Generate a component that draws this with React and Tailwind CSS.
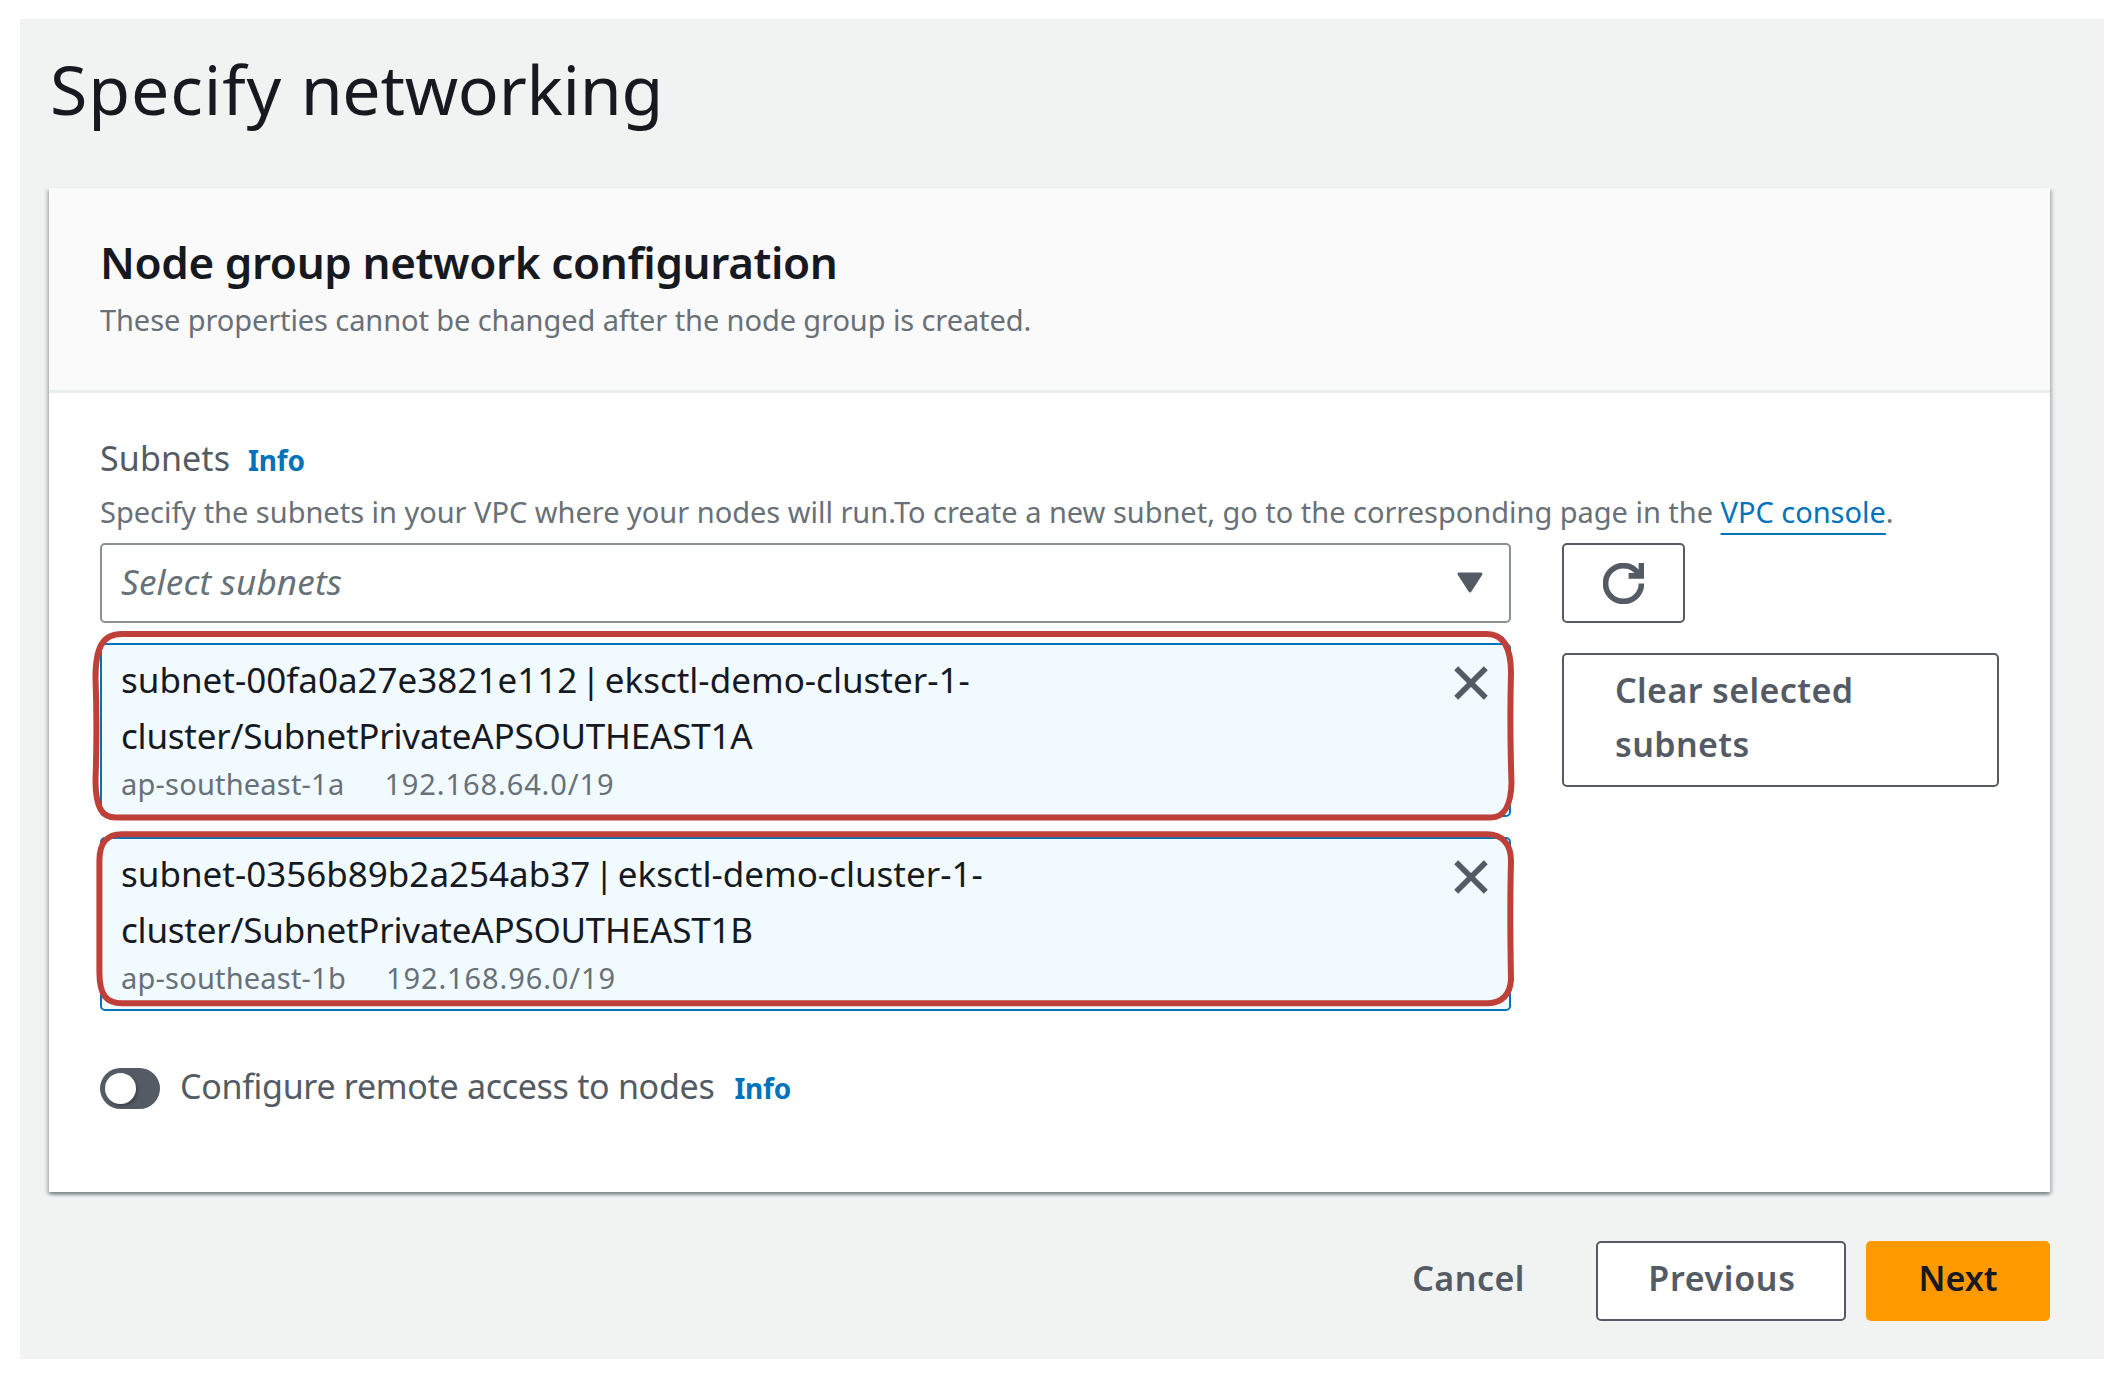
const FONT = "font-['Noto_Sans','Open_Sans',sans-serif]";

function RefreshIcon() {
  return (
    <svg className="size-[41px]" viewBox="0 0 16 16" fill="none" stroke="#545b64" strokeWidth="2.2">
      <path d="M10 5h5V0" />
      <path d="M15 8a6.957 6.957 0 0 1-7 7 6.957 6.957 0 0 1-7-7 6.957 6.957 0 0 1 7-7 6.87 6.87 0 0 1 6.3 4" />
    </svg>
  );
}

function CloseIcon() {
  return (
    <svg className="size-[34px]" viewBox="0 0 34 34" fill="none" stroke="#545b64" strokeWidth="5.6">
      <path d="M2.2 2.2 31.8 31.8M31.8 2.2 2.2 31.8" />
    </svg>
  );
}

function CaretIcon() {
  return (
    <svg className="h-[21px] w-[26px]" viewBox="0 0 26 21" fill="#545b64" stroke="#545b64" strokeWidth="3" strokeLinejoin="round">
      <path d="M2 2h22L13 19z" />
    </svg>
  );
}

const subnets = [
  {
    lines: ["subnet-00fa0a27e3821e112 | eksctl-demo-cluster-1-", "cluster/SubnetPrivateAPSOUTHEAST1A"],
    zone: "ap-southeast-1a",
    cidr: "192.168.64.0/19",
    outline:
      "M22 -9H1387C1404 -9 1411 5 1411 30C1410 65 1410 95 1411.5 140C1411 162 1404 174.5 1391 174.5H16C2 174.5 -4.5 165 -4.5 137C-3.2 100 -3.2 70 -4.5 35C-4.5 5 2 -9 22 -9Z",
  },
  {
    lines: ["subnet-0356b89b2a254ab37 | eksctl-demo-cluster-1-", "cluster/SubnetPrivateAPSOUTHEAST1B"],
    zone: "ap-southeast-1b",
    cidr: "192.168.96.0/19",
    outline:
      "M22 -2.7H1387C1402 -2.7 1411 7 1411 24C1410 60 1410 90 1411 143C1410 157 1402 166.3 1388 166.3H22C7 166.3 -0.6 159 -0.6 135V24C-0.6 5 7 -2.7 22 -2.7Z",
  },
];

function SubnetToken({ subnet }) {
  return (
    <div className="relative flex h-[174px] justify-between rounded-[5px] border-[2.6px] border-[#0073bb] bg-[#f1faff] pt-[7px] pr-[21px] pl-[19px]">
      <div className="text-[#16191f]">
        <div className="text-[35px] leading-[56px] whitespace-nowrap [word-spacing:-5px]">{subnet.lines[0]}</div>
        <div className="text-[35px] leading-[56px] tracking-[-0.22px] whitespace-nowrap">{subnet.lines[1]}</div>
        <div className="flex gap-[40px] text-[29px] leading-[40px] text-[#687078]">
          <span className="tracking-[0.2px]">{subnet.zone}</span>
          <span className="tracking-[0.9px]">{subnet.cidr}</span>
        </div>
      </div>
      <div className="pt-[14px]">
        <CloseIcon />
      </div>
      <svg
        className="pointer-events-none absolute -top-[2px] -left-[2px] h-[174px] w-[1411px] overflow-visible"
        viewBox="0 0 1411 174"
        fill="none"
        stroke="#bf4039"
        strokeWidth="6"
      >
        <path d={subnet.outline} />
      </svg>
    </div>
  );
}

export default function App() {
  return (
    <div className={`h-[1380px] w-[2124px] overflow-hidden bg-white pt-[19px] pl-[20px] text-[#16191f] ${FONT}`}>
      <main className="h-[1340px] w-[2084px] bg-[#f1f3f3] pt-[30px] pr-[54px] pl-[29px]">
        <h1 className="pl-px text-[68px] leading-[80px]">
          <span className="tracking-[0.9px]">Specify </span>
          <span className="tracking-[-0.3px]">networking</span>
        </h1>

        <section className="mt-[59px] h-[1004px] bg-white shadow-[0_3px_3px_0_rgba(0,28,36,0.3),3px_2px_3px_0_rgba(0,28,36,0.15),-3px_2px_3px_0_rgba(0,28,36,0.15)]">
          <header className="h-[205px] border-b-[3px] border-[#eaeded] bg-[#fafafa] px-[51px] pt-[46px]">
            <h2 className="text-[44px] leading-[56px] font-semibold tracking-[-0.38px]">Node group network configuration</h2>
            <p className="mt-[10px] text-[29px] leading-[40px] tracking-[-0.09px] text-[#687078]">
              These properties cannot be changed after the node group is created.
            </p>
          </header>

          <div className="px-[51px] pt-[41px]">
            <div className="flex items-baseline gap-[18px] leading-[48px]">
              <span className="text-[34px] tracking-[0.1px] text-[#545b64]">Subnets</span>
              <a className="text-[28px] font-bold tracking-[-0.2px] text-[#0073bb]">Info</a>
            </div>
            <p className="mt-[8px] text-[29px] leading-[40px] tracking-[-0.02px] whitespace-nowrap text-[#687078]">
              Specify the subnets in your VPC where your nodes will run.To create a new subnet, go to the corresponding page in the{" "}
              <a className="text-[#0073bb] underline decoration-2 underline-offset-[10px]">VPC console</a>.
            </p>

            <div className="mt-[11px] flex items-start gap-[51px]">
              <div className="flex w-[1411px] flex-col gap-[20px]">
                <div className="flex h-[80px] items-center justify-between rounded-[5px] border-[2.6px] border-[#879196] pr-[26px] pb-[2px] pl-[19px]">
                  <span className="text-[35px] tracking-[0.2px] text-[#687078] italic">Select subnets</span>
                  <CaretIcon />
                </div>
                {subnets.map((s) => (
                  <SubnetToken key={s.cidr} subnet={s} />
                ))}
              </div>
              <div className="flex flex-col gap-[30px]">
                <button className="flex h-[80px] w-[123px] items-center justify-center rounded-[5px] border-[2.6px] border-[#545b64]">
                  <RefreshIcon />
                </button>
                <button className="h-[134px] w-[437px] rounded-[5px] border-[2.6px] border-[#545b64] pb-[7px] pl-[51px] text-left text-[34px] leading-[54px] font-semibold tracking-[0.4px] text-[#545b64]">
                  Clear selected
                  <br />
                  subnets
                </button>
              </div>
            </div>

            <div className="mt-[50px] flex h-[48px] items-end">
              <span className="flex h-[41px] w-[60px] items-center rounded-full bg-[#545b64] pl-[5px]">
                <span className="size-[31px] rounded-full bg-white shadow-[2px_2px_3px_rgba(0,0,0,0.25)]" />
              </span>
              <div className="-mb-[3px] ml-[20px] flex items-baseline gap-[20px] leading-[48px]">
                <span className="text-[34px] tracking-[-0.3px] text-[#545b64]">Configure remote access to nodes</span>
                <a className="text-[28px] font-bold tracking-[-0.2px] text-[#0073bb]">Info</a>
              </div>
            </div>
          </div>
        </section>

        <footer className="mt-[49px] flex h-[80px] justify-end text-[34px] font-semibold text-[#545b64]">
          <button className="mr-[71px] pb-[5px] tracking-[0.5px]">Cancel</button>
          <button className="mr-[20px] w-[250px] rounded-[5px] border-[2.6px] border-[#545b64] bg-white pb-[5px] pl-[2px] tracking-[0.7px]">
            Previous
          </button>
          <button className="w-[184px] rounded-[5px] bg-[#ff9900] pb-[5px] text-[#16191f]">Next</button>
        </footer>
      </main>
    </div>
  );
}
